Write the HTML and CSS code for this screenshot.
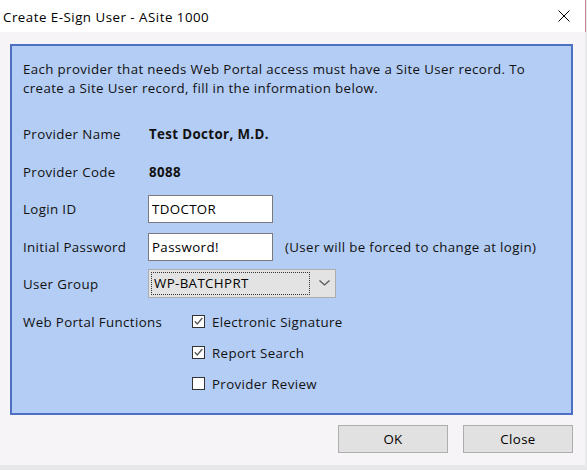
FILE: index.html
```html
<!DOCTYPE html>
<html>
<head>
<meta charset="utf-8">
<link rel="stylesheet" href="styles.css">
</head>
<body>
<div class="window">
  <div class="titlebar">
    <span class="title">Create E-Sign User - ASite 1000</span>
    <svg class="close" width="12" height="12" viewBox="0 0 12 12"><path d="M0.5 0.5 L11.5 11.5 M11.5 0.5 L0.5 11.5" stroke="#000" stroke-width="1" fill="none"/></svg>
  </div>
  <div class="content">
    <div class="panel">
      <p class="intro">Each provider that needs Web Portal access must have a Site User record. To<br>create a Site User record, fill in the information below.</p>
      <div class="form">
        <span class="label">Provider Name</span>
        <span class="value bold">Test Doctor, M.D.</span>
        <span class="label">Provider Code</span>
        <span class="value bold">8088</span>
        <span class="label">Login ID</span>
        <span class="value"><span class="input">TDOCTOR</span></span>
        <span class="label">Initial Password</span>
        <span class="value"><span class="input">Password!</span><span class="note">(User will be forced to change at login)</span></span>
        <span class="label">User Group</span>
        <span class="value">
          <span class="combo"><span class="focus">WP-BATCHPRT</span>
            <svg class="chev" width="11" height="6" viewBox="0 0 11 6"><path d="M0.5 0.5 L5.5 5 L10.5 0.5" stroke="#555" stroke-width="1.3" fill="none"/></svg>
          </span>
        </span>
      </div>
      <div class="functions">
        <span class="label flabel">Web Portal Functions</span>
        <div class="checks">
          <div class="check"><span class="box"><svg width="11" height="11" viewBox="0 0 11 11"><path d="M1.8 5.2 L4.3 8 L9.3 2" stroke="#5a5a5a" stroke-width="1.4" fill="none"/></svg></span><span>Electronic Signature</span></div>
          <div class="check"><span class="box"><svg width="11" height="11" viewBox="0 0 11 11"><path d="M1.8 5.2 L4.3 8 L9.3 2" stroke="#5a5a5a" stroke-width="1.4" fill="none"/></svg></span><span>Report Search</span></div>
          <div class="check"><span class="box"></span><span>Provider Review</span></div>
        </div>
      </div>
    </div>
    <div class="buttons">
      <button class="btn">OK</button>
      <button class="btn">Close</button>
    </div>
  </div>
</div>
</body>
</html>
```
FILE: styles.css
```css
html, body {
  margin: 0;
  padding: 0;
}
body {
  background: #e7e7e9;
  width: 587px;
  height: 470px;
  overflow: hidden;
  font-family: "Open Sans", "Noto Sans", sans-serif;
  font-size: 13.3px;
  letter-spacing: 0.37px;
  color: #111;
}
.window {
  width: 586px;
  height: 465px;
  background: #f7f4f7;
  display: flex;
  flex-direction: column;
}
.titlebar {
  height: 32px;
  background: #fff;
  display: flex;
  align-items: center;
  justify-content: space-between;
  padding-left: 3px;
  padding-right: 15px;
  border-right: 1px solid #c9868f;
  box-sizing: border-box;
}
.title {
  font-size: 13.3px;
  letter-spacing: 0.5px;
  color: #000;
  position: relative;
  top: 1px;
}
.close {
  display: block;
}
.content {
  padding: 12px 0 0 10px;
  border-right: 1px solid #ebe9eb;
  flex: 1;
}
.panel {
  width: 563px;
  box-sizing: border-box;
  border: 2px solid #4e70c2;
  background: #b4cdf5;
  padding: 14px 11px 15px 11px;
}
.intro {
  margin: 0;
  line-height: 19px;
  white-space: nowrap;
}
.form {
  margin-top: 22px;
  display: grid;
  grid-template-columns: 125px auto;
  grid-auto-rows: 28px;
  row-gap: 9.6px;
  align-items: center;
}
.value {
  display: flex;
  align-items: center;
}
.bold {
  font-weight: bold;
  padding-left: 1px;
}
.input {
  width: 125px;
  height: 28px;
  box-sizing: border-box;
  background: #fff;
  border: 1px solid #7a7a7a;
  padding: 0 3px;
  display: flex;
  align-items: center;
  color: #000;
}
.note {
  margin-left: 12px;
  white-space: nowrap;
}
.combo {
  width: 188px;
  height: 29px;
  box-sizing: border-box;
  background: #e3e3e3;
  border: 1px solid #acacac;
  display: flex;
  align-items: center;
  padding: 2px;
  position: relative;
  top: -1px;
}
.focus {
  width: 159px;
  height: 100%;
  box-sizing: border-box;
  border: 1px dotted #333;
  display: flex;
  align-items: center;
  padding-left: 2px;
  color: #000;
}
.chev {
  margin-left: 9px;
}
.functions {
  margin-top: 9.6px;
  display: flex;
}
.flabel {
  width: 169px;
  height: 28px;
  display: flex;
  align-items: center;
  flex: none;
}
.checks {
  display: flex;
  flex-direction: column;
  gap: 3px;
}
.check {
  height: 28px;
  display: flex;
  align-items: center;
  gap: 7px;
}
.box {
  width: 13px;
  height: 13px;
  box-sizing: border-box;
  border: 1px solid #333;
  background: #fff;
  display: flex;
  align-items: center;
  justify-content: center;
}
.box svg {
  display: block;
}
.buttons {
  margin-top: 10px;
  margin-left: -10px;
  width: 586px;
  display: flex;
  justify-content: flex-end;
  gap: 15px;
  padding-right: 13px;
  box-sizing: border-box;
}
.btn {
  width: 110px;
  height: 28px;
  background: #e1e1e1;
  border: 1px solid #adadad;
  font-family: inherit;
  font-size: 13.3px;
  letter-spacing: 0.37px;
  color: #000;
  padding: 0;
}
```
